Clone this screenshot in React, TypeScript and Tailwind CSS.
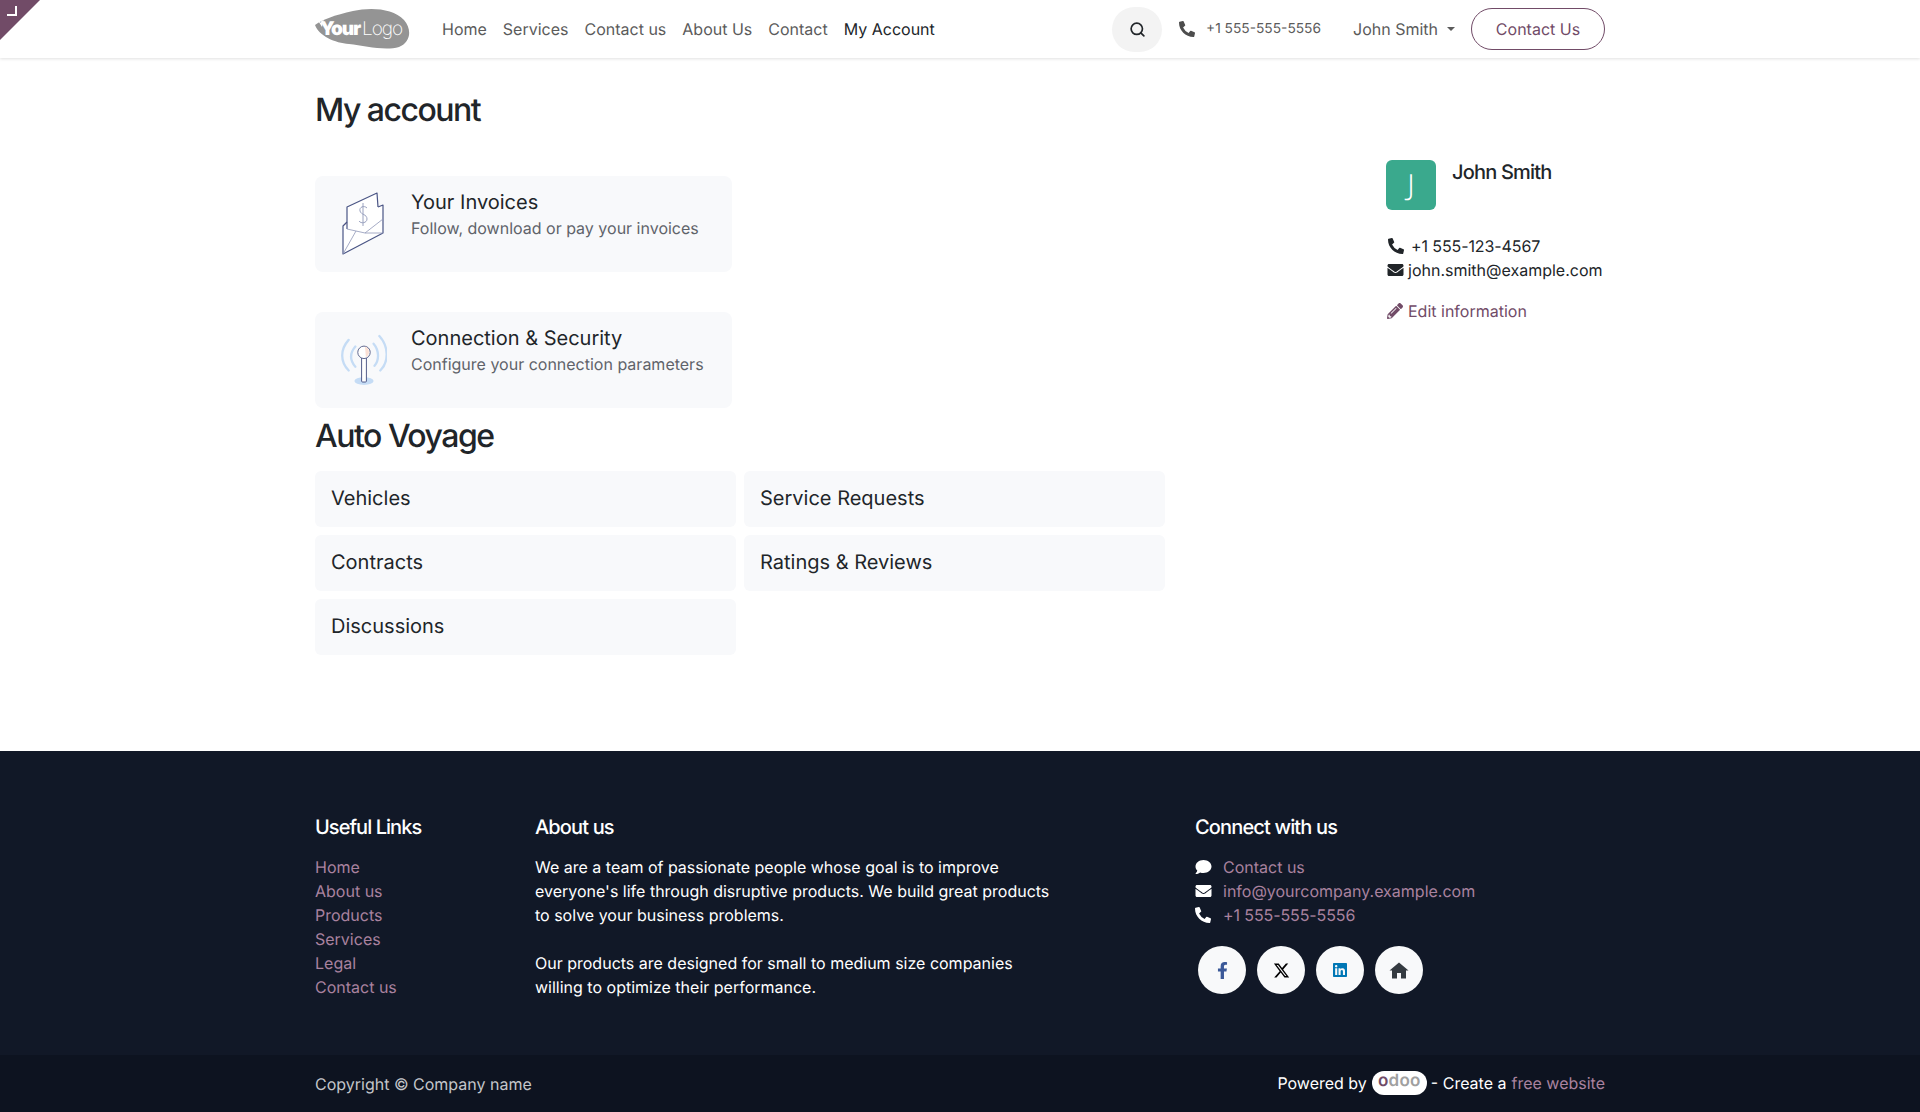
import { FaPhoneAlt, FaEnvelope, FaPencilAlt, FaComment, FaFacebookF, FaLinkedin } from "react-icons/fa";
import { FaXTwitter } from "react-icons/fa6";
import { Search } from "lucide-react";

const Logo = () => (
  <svg width="96" height="42" viewBox="0 0 96 42" className="block">
    <path d="M0 17 C6 12 20 7 38 3 C55 -1 78 0 89 12 C97 21 96 34 84 39 C70 43 50 38 34 36 C20 35 4 28 0 17 Z" fill="#949494" />
    <path d="M2 11 L6 15 L9 10 L7 19 Z" fill="#fff" />
    <text x="5" y="27" fontFamily="Inter, sans-serif" fontWeight="900" fontSize="19" letterSpacing="-1.1" fill="#fff">Your</text>
    <text x="47" y="27" fontFamily="Inter, sans-serif" fontWeight="200" fontSize="19" letterSpacing="-1" fill="#fff">Logo</text>
  </svg>
);

const InvoiceIcon = () => (
  <svg width="44" height="64" viewBox="0 0 44 64" fill="none" className="block">
    <path d="M2 33 L5 31 L7 37 L4 33Z" fill="#fbd9cc" />
    <path d="M36 15 L41 13 L40 27 Z" fill="#fbd9cc" />
    <path d="M1 34 L1 62 L41 41 L41 13 L36 15" fill="#fff" />
    <path d="M5 15 L35 1 L36 27 L23 41 L5 37 Z" fill="#fff" />
    <path d="M5 30 L1 34 L1 62 L41 41 L41 13 L36 15" stroke="#4a5585" strokeWidth="1.2" strokeLinejoin="round" />
    <path d="M5 37 L5 15 L35 1 L36 15" stroke="#4a5585" strokeWidth="1.2" strokeLinejoin="round" />
    <path d="M5 37 L23 41 L41 27 M1 62 L14 39 M23 41 L41 41" stroke="#8f97b8" strokeWidth="0.8" />
    <path d="M25 16 C22 13 17 15 18 19 C19 23 25 22 25 27 C25 31 19 32 17 29 M21 11 L21 34" stroke="#8f97b8" strokeWidth="0.9" />
  </svg>
);

const SignalIcon = () => (
  <svg width="46" height="54" viewBox="0 0 48 56" fill="none" className="block">
    <ellipse cx="24" cy="50" rx="10" ry="4" fill="#c5dcf5" />
    <path d="M8 7 C-1 17 -1 30 8 39 M40 3 C50 14 50 30 41 39 M15 14 C9 21 9 28 15 35 M34 11 C40 18 40 28 35 34" stroke="#c5dcf5" strokeWidth="2.4" strokeLinecap="round" />
    <rect x="21.5" y="22" width="5" height="29" rx="1" fill="#fff" stroke="#4a5585" strokeWidth="1" />
    <circle cx="24" cy="20" r="6.5" fill="#fff" stroke="#5a628a" strokeWidth="1" />
    <path d="M25 14 A6 6 0 0 1 26 25 Z" fill="#fbe0d5" />
  </svg>
);

const HomeIcon = () => (
  <svg width="20" height="17" viewBox="0 0 20 17" className="block" fill="#343a40">
    <path d="M10 0.5 L0.5 8.5 L3 8.5 L3 16.5 L8 16.5 L8 11 L12 11 L12 16.5 L17 16.5 L17 8.5 L19.5 8.5 Z" />
  </svg>
);

const Card = ({ icon, title, sub }: { icon: React.ReactNode; title: string; sub: string }) => (
  <div className="flex h-24 w-[417px] items-center rounded-lg bg-[#f8f9fb]">
    <div className="flex w-24 shrink-0 items-center justify-center pl-[2px]">{icon}</div>
    <div className="pb-[18px]">
      <div className="text-[20px] leading-[24px] text-[#212529]">{title}</div>
      <div className="mt-[2px] text-[16px] leading-[24px] text-[#5f636a]">{sub}</div>
    </div>
  </div>
);

const Row = ({ label }: { label: string }) => (
  <div className="flex h-[56px] items-center rounded-md bg-[#f8f9fb] px-4 pb-[3px] text-[20px] text-[#212529]">{label}</div>
);

const SocialBtn = ({ children }: { children: React.ReactNode }) => (
  <div className="flex h-12 w-12 items-center justify-center rounded-full bg-[#f8f9fa]">{children}</div>
);

export default function App() {
  const nav = ["Home", "Services", "Contact us", "About Us", "Contact"];
  const links = ["Home", "About us", "Products", "Services", "Legal", "Contact us"];
  return (
    <div className="relative flex min-h-[1112px] flex-col bg-white font-['Inter',sans-serif] text-[16px] leading-[24px] text-[#212529] [text-rendering:geometricPrecision]">
      <div className="absolute left-0 top-0 h-10 w-10 bg-[#714b67] [clip-path:polygon(0_0,100%_0,0_100%)]">
        <div className="absolute left-[7px] top-[6px] h-[10px] w-[10px] border-b-2 border-r-2 border-white" />
      </div>

      <header className="h-[58px] shadow-[0_1px_3px_rgba(0,0,0,0.12)]">
        <div className="mx-auto flex h-full w-[1290px] items-center">
          <div className="w-[95px]"><Logo /></div>
          <nav className="ml-[32px] flex gap-[16px] text-[#5b5b5b]">
            {nav.map((n) => <span key={n}>{n}</span>)}
            <span className="text-[#212529]">My Account</span>
          </nav>
          <div className="ml-auto flex items-center">
            <div className="flex h-[45px] w-[50px] items-center justify-center rounded-full bg-[#f3f3f3]">
              <Search className="h-[17px] w-[17px] text-[#212529]" strokeWidth={2.4} />
            </div>
            <FaPhoneAlt className="ml-[17px] h-[16px] w-[16px] text-[#4d4d4d]" />
            <span className="ml-[11px] text-[13.75px] text-[#5b5b5b]">+1 555-555-5556</span>
            <span className="ml-[32px] text-[#5b5b5b]">John Smith</span>
            <span className="ml-[9px] h-0 w-0 border-x-[4px] border-t-[4px] border-x-transparent border-t-[#5b5b5b]" />
            <div className="ml-[16px] flex h-[42px] w-[134px] items-center justify-center rounded-full border border-[#714b67] text-[#714b67]">Contact Us</div>
          </div>
        </div>
      </header>

      <main className="mx-auto flex h-[693px] w-[1290px]">
        <div className="w-[1071px]">
          <h1 className="mt-[33px] text-[32px] font-medium leading-[38px] tracking-[-1.5px] text-[#212529]">My account</h1>
          <div className="mt-[47px] flex flex-col gap-[40px]">
            <Card icon={<InvoiceIcon />} title="Your Invoices" sub="Follow, download or pay your invoices" />
            <Card icon={<SignalIcon />} title="Connection & Security" sub="Configure your connection parameters" />
          </div>
          <h2 className="mt-[9px] text-[32px] font-medium leading-[38px] tracking-[-1.5px]">Auto Voyage</h2>
          <div className="mt-[16px] grid w-[850px] grid-cols-2 gap-2">
            <Row label="Vehicles" />
            <Row label="Service Requests" />
            <Row label="Contracts" />
            <Row label="Ratings & Reviews" />
            <Row label="Discussions" />
          </div>
        </div>
        <aside className="pt-[102px]">
          <div className="flex">
            <div className="flex h-[50px] w-[50px] items-center justify-center rounded-md bg-[#3aa98d] font-['Noto_Sans',sans-serif] text-[29px] font-light text-white">J</div>
            <div className="ml-4 text-[20px] font-medium leading-[24px] tracking-[-0.8px]">John Smith</div>
          </div>
          <div className="mt-6 flex items-center">
            <FaPhoneAlt className="ml-[2px] h-[16px] w-[16px]" />
            <span className="ml-[7px] tracking-[-0.1px]">+1 555-123-4567</span>
          </div>
          <div className="flex items-center">
            <FaEnvelope className="ml-[1px] h-[16px] w-[17px]" />
            <span className="ml-[4px]">john.smith@example.com</span>
          </div>
          <div className="mt-[17px] flex items-center text-[#714b67]">
            <FaPencilAlt className="ml-[1px] h-[16px] w-[16px]" />
            <span className="ml-[5px]">Edit information</span>
          </div>
        </aside>
      </main>

      <footer className="flex h-[361px] flex-col bg-[#111827] text-white">
        <div className="mx-auto flex w-[1290px] flex-1 pt-[64px]">
          <div className="w-[220px]">
            <h5 className="text-[20px] font-medium leading-[24px] tracking-[-0.95px]">Useful Links</h5>
            <ul className="mt-[16px] text-[#a9829f]">
              {links.map((l) => <li key={l}>{l}</li>)}
            </ul>
          </div>
          <div className="w-[660px]">
            <h5 className="text-[20px] font-medium leading-[24px] tracking-[-0.85px]">About us</h5>
            <p className="mt-[16px] w-[525px]">We are a team of passionate people whose goal is to improve everyone's life through disruptive products. We build great products to solve your business problems.</p>
            <p className="mt-[24px] w-[525px]">Our products are designed for small to medium size companies willing to optimize their performance.</p>
          </div>
          <div>
            <h5 className="text-[20px] font-medium leading-[24px] tracking-[-0.85px]">Connect with us</h5>
            <ul className="mt-[16px] text-[#a9829f]">
              <li className="flex items-center"><FaComment className="h-[16px] w-[17px] text-white" /><span className="ml-[11px]">Contact us</span></li>
              <li className="flex items-center"><FaEnvelope className="h-[16px] w-[17px] text-white" /><span className="ml-[11px]">info@yourcompany.example.com</span></li>
              <li className="flex items-center"><FaPhoneAlt className="h-[16px] w-[16px] text-white" /><span className="ml-[12px] tracking-[-0.1px]">+1 555-555-5556</span></li>
            </ul>
            <div className="ml-[3px] mt-[19px] flex gap-[11px]">
              <SocialBtn><FaFacebookF className="h-[17px] w-[17px] text-[#3b5998]" /></SocialBtn>
              <SocialBtn><FaXTwitter className="h-[17px] w-[17px] text-black" /></SocialBtn>
              <SocialBtn><FaLinkedin className="h-[16px] w-[16px] text-[#0077b5]" /></SocialBtn>
              <SocialBtn><HomeIcon /></SocialBtn>
            </div>
          </div>
        </div>
        <div className="h-[57px] bg-[#0d1320]">
          <div className="mx-auto flex h-full w-[1290px] items-center justify-between">
            <span className="text-[#c4c6ca]">Copyright © Company name</span>
            <span className="flex items-center pb-[2px]">
              Powered by
              <span className="ml-[5px] mr-[4px] flex h-[24px] w-[55px] items-center justify-center rounded-full bg-white pb-[2px] text-[17px] font-semibold leading-none tracking-[0.3px] text-[#a0a0a0]"><span className="text-[#714b67]">o</span>doo</span>
              - Create a<span className="ml-[5px] text-[#a9829f]">free website</span>
            </span>
          </div>
        </div>
      </footer>
    </div>
  );
}
